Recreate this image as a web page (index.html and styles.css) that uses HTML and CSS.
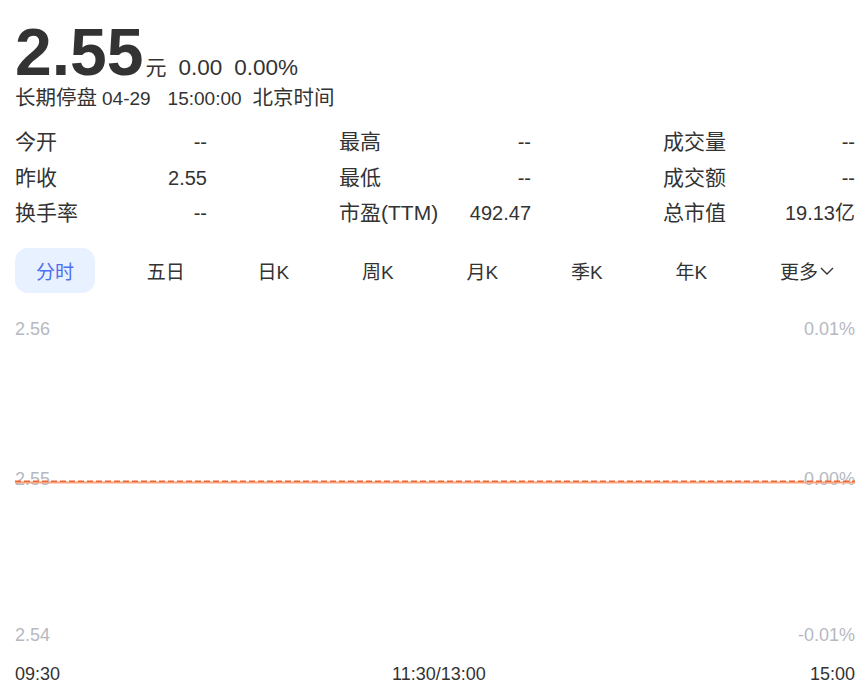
FILE: index.html
```html
<!DOCTYPE html>
<html>
<head>
    <meta charset="utf-8" />
    <title>2.55</title>
    <link rel="stylesheet" href="styles.css">
</head>
<body>
    <div class="page">
        <div class="priceRow">
            <span class="price">2.55</span>
            <span class="unit">元</span>
            <span class="change">0.00</span>
            <span class="change">0.00%</span>
        </div>
        <p class="status">
            <span class="cn">长期停盘</span><span class="date">04-29</span><span class="clock">15:00:00</span><span class="cn zone">北京时间</span>
        </p>

        <div class="stats">
            <div class="stat"><span class="label">今开</span><span>--</span></div>
            <div class="stat"><span class="label">最高</span><span>--</span></div>
            <div class="stat"><span class="label">成交量</span><span>--</span></div>
            <div class="stat"><span class="label">昨收</span><span>2.55</span></div>
            <div class="stat"><span class="label">最低</span><span>--</span></div>
            <div class="stat"><span class="label">成交额</span><span>--</span></div>
            <div class="stat"><span class="label">换手率</span><span>--</span></div>
            <div class="stat"><span class="label">市盈(TTM)</span><span>492.47</span></div>
            <div class="stat"><span class="label">总市值</span><span>19.13亿</span></div>
        </div>

        <div class="tabs">
            <div class="tab active">分时</div>
            <div class="tab">五日</div>
            <div class="tab">日K</div>
            <div class="tab">周K</div>
            <div class="tab">月K</div>
            <div class="tab">季K</div>
            <div class="tab">年K</div>
            <div class="tab">更多<svg class="chevron" width="14" height="8" viewBox="0 0 14 8"><path d="M1 1 L7 7 L13 1" fill="none" stroke="#333" stroke-width="1.4"/></svg></div>
        </div>

        <div class="chart">
            <div class="axis">
                <span>2.56</span>
                <span class="mid">2.55</span>
                <span>2.54</span>
            </div>
            <div class="axis right">
                <span>0.01%</span>
                <span class="mid">0.00%</span>
                <span>-0.01%</span>
            </div>
            <svg class="priceLine" width="840" height="4" viewBox="0 0 840 4" preserveAspectRatio="none">
                <line x1="0" y1="2.5" x2="840" y2="2.5" stroke="#f7a47c" stroke-width="2"/>
                <line x1="0" y1="1.3" x2="840" y2="1.3" stroke="#ee6636" stroke-width="1.6" stroke-dasharray="6 3"/>
            </svg>
        </div>

        <div class="times">
            <span>09:30</span>
            <span class="midTime">11:30/13:00</span>
            <span>15:00</span>
        </div>
    </div>
</body>
</html>
```

FILE: styles.css
```css
body {
    font-family: "Liberation Sans", "Noto Sans CJK SC", sans-serif;
    color: #333;
    margin: 0;
    background: white;
}
p {
    margin: 0;
}
.page {
    padding: 19px 10px 0 15px;
}
.priceRow {
    display: flex;
    align-items: baseline;
    height: 66px;
    line-height: 66px;
}
.price {
    font-size: 66px;
    font-weight: bold;
}
.unit {
    font-size: 21px;
    line-height: 24px;
    margin-left: 2px;
}
.change {
    font-size: 22.5px;
    line-height: 24px;
    margin-left: 12px;
}
.status {
    display: flex;
    align-items: baseline;
    height: 26px;
    font-size: 19px;
    line-height: 26px;
}
.cn {
    font-size: 20.5px;
}
.date {
    margin-left: 5px;
}
.clock {
    margin-left: 17px;
}
.zone {
    margin-left: 11px;
}
.stats {
    display: grid;
    grid-template-columns: repeat(3, 192px);
    grid-auto-rows: 35.5px;
    justify-content: space-between;
    margin-top: 13px;
    font-size: 20px;
    line-height: 35.5px;
}
.stat {
    display: flex;
    justify-content: space-between;
    align-items: baseline;
    height: 35.5px;
}
.label {
    font-size: 21px;
}
.tabs {
    display: flex;
    justify-content: space-between;
    margin-top: 17px;
    font-size: 19px;
}
.tab {
    display: flex;
    align-items: center;
    height: 45px;
    padding: 0 21px;
    border-radius: 13px;
}
.tab.active {
    background-color: #e8f1ff;
    color: #4e6ef2;
}
.chevron {
    margin-left: 2px;
    margin-top: 1px;
}
.chart {
    position: relative;
    display: flex;
    justify-content: space-between;
    height: 326px;
    margin-top: 26px;
    font-size: 18px;
    line-height: 20px;
    color: #b6b9c1;
}
.axis {
    display: flex;
    flex-direction: column;
    justify-content: space-between;
}
.axis.right {
    align-items: flex-end;
}
.mid {
    margin-bottom: 6px;
}
.priceLine {
    position: absolute;
    left: 0;
    top: 161px;
}
.times {
    display: flex;
    justify-content: space-between;
    margin-top: 19px;
    font-size: 18px;
    line-height: 20px;
}
.midTime {
    margin-left: 8px;
}
```
